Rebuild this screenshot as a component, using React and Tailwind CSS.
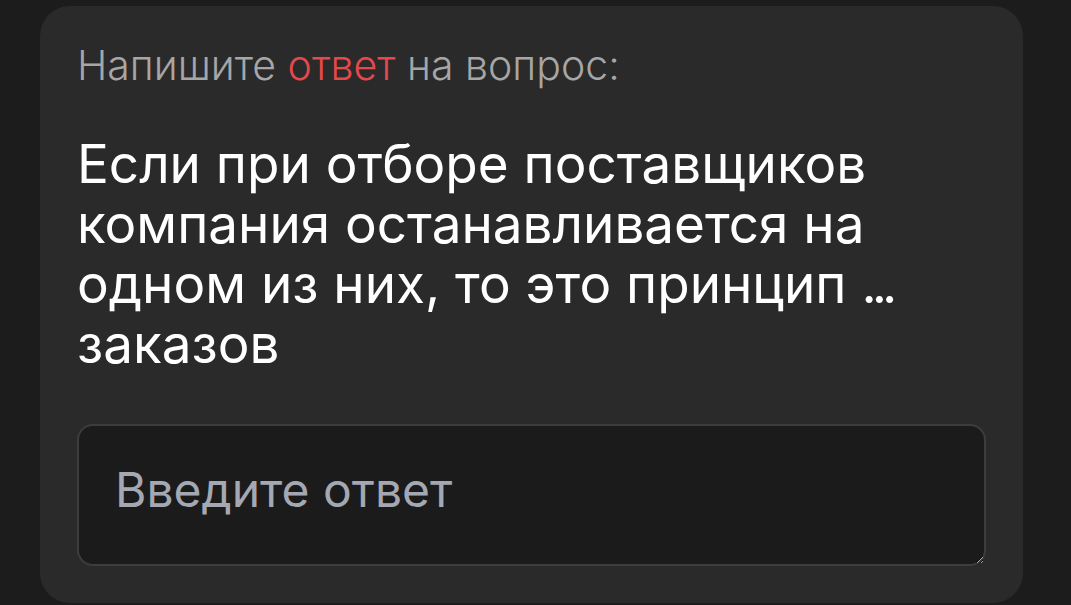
export default function App() {
  return (
    <div className="min-h-screen w-full bg-[#1c1c1c] px-[40px] pt-[6px] font-['Inter',sans-serif]">
      <div className="flex h-[597px] w-[983px] flex-col rounded-[30px] bg-[#2a2a2a] px-[37px] pt-[34px]">
        <p className="text-[41px] font-light leading-[50px] text-[#a6a6a6]">
          Напишите <span className="text-[#e5484d]">ответ</span> на вопрос:
        </p>
        <h2 className="mt-[44px] text-[53px] font-normal leading-[60px] text-white">
          Если при отборе поставщиков
          <br />
          компания останавливается на
          <br />
          одном из них, то это принцип <span className="tracking-[-5px]">...</span>
          <br />
          заказов
        </h2>
        <textarea
          placeholder="Введите ответ"
          className="mt-[50px] h-[142px] w-full rounded-[16px] border-2 border-[#3d3d3d] bg-[#1b1b1b] px-[36px] pt-[38px] pb-[10px] text-[48px] leading-[52px] text-white outline-none placeholder:text-[#a4a8b2]"
        />
      </div>
    </div>
  );
}
